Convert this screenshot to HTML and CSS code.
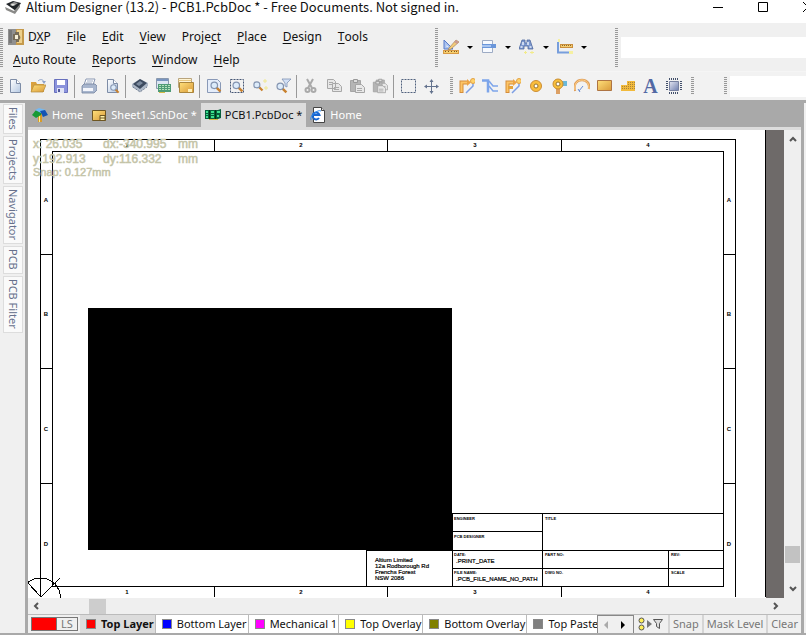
FILE: index.html
```
<!DOCTYPE html>
<html lang="en">
<head>
<meta charset="utf-8">
<title>Altium Designer (13.2) - PCB1.PcbDoc *</title>
<link rel="stylesheet" href="styles.css">
</head>
<body>
<svg class="defs" aria-hidden="true">
  <defs>
    <linearGradient id="blue" x1="0" y1="0" x2="1" y2="1"><stop offset="0" stop-color="#fff"/><stop offset="1" stop-color="#b4c8e2"/></linearGradient>
    <linearGradient id="gold" x1="0" y1="0" x2="1" y2="1"><stop offset="0" stop-color="#ffe07a"/><stop offset="1" stop-color="#d99a3a"/></linearGradient>
    <linearGradient id="steel" x1="0" y1="0" x2="1" y2="1"><stop offset="0" stop-color="#e4e6f2"/><stop offset="1" stop-color="#6f7fae"/></linearGradient>
    <symbol id="page" viewBox="0 0 16 16"><path d="M3.500 1.500h6l4 4v9h-10z" fill="url(#blue)" stroke="#7d8ca6"/><path d="M9.500 1.500v4h4" fill="#fff" stroke="#7d8ca6"/></symbol>
    <symbol id="lens" viewBox="0 0 16 16"><path d="M9 9l5 5" stroke="#c8812e" stroke-width="3"/><circle cx="6.500" cy="6.500" r="4" fill="#dcebfa" stroke="#8494b0" stroke-width="1.500"/></symbol>
    <symbol id="clip" viewBox="0 0 16 16"><path d="M1.500 2.500h10v11h-10z" fill="#b5b5b5" stroke="#a5a5a5"/><path d="M4.500 1.500h4v3h-4z" fill="#ddd" stroke="#999"/><path d="M6.500 6.500h6l3 3v5h-9z" fill="#e8e8e8" stroke="#a5a5a5"/><path d="M8 10.500h5M8 12.500h5" stroke="#aaa"/></symbol>
    <symbol id="pcb" viewBox="0 0 16 16"><path d="M0 3h13l3-1v9l-3 1H0z" fill="#075f3d"/><path d="M1 4h2v2H1zM1 7h2v1H1zM1 9h2v2H1zM6 4h3v2H6zM6 7h3v1H6zM6 9h3v2H6zM12 4h3v2h-3zM12 8h2v2h-2z" fill="#3be08c"/><path d="M4.500 3v9M10.500 3v9" stroke="#031"/><path d="M4 12h9v1H4z" fill="#d5b944"/></symbol>
    <symbol id="route" viewBox="0 0 16 16"><path d="M2.500 15V4.500H9" fill="none" stroke="#d58d3b" stroke-width="4"/><path d="M2.500 14V4.500H9" fill="none" stroke="#fdc566" stroke-width="2"/><path d="M8 1l4 3.500L8 8z" fill="#eda445"/><path d="M7 15l7-7V4" fill="none" stroke="#7c9ee4" stroke-width="1.500"/><circle cx="14" cy="3" r="2.500" fill="#ffd36b" stroke="#e2a145"/></symbol>
  </defs>
</svg>

<header class="titlebar">
  <svg class="logo" viewBox="0 0 16 16"><path d="M1 4l7-3 8 2-5 8z" fill="#202428"/><path d="M5 4l4-2 4 1-4 3z" fill="#999"/><path d="M0 7l9 4 6-7v3l-5 7-9-4z" fill="#8a8a88"/><path d="M7 4l3 0-2 2-3-1z" fill="#e4e4df"/></svg>
  <h1>Altium Designer (13.2) - PCB1.PcbDoc * - Free Documents. Not signed in.</h1>
  <div class="winbtns">
    <button aria-label="Minimize"><svg viewBox="0 0 10 10"><path d="M0 5.500h10" stroke="#000"/></svg></button>
    <button aria-label="Maximize"><svg viewBox="0 0 10 10"><path d="M.5 .5h9v9h-9z" fill="none" stroke="#000"/></svg></button>
    <button aria-label="Close"><svg viewBox="0 0 10 10"><path d="M0 0l10 10M10 0L0 10" stroke="#000"/></svg></button>
  </div>
</header>

<div class="menurow">
  <i class="grip"></i>
  <nav class="menus">
    <div>
      <button class="dxp"><svg viewBox="0 0 16 16"><path d="M0 0h8v16H0z" fill="#909090"/><path d="M8 0h8v16H8z" fill="#c59a4c"/><path d="M9 1h5v13H9z" fill="#edd08c"/><path d="M1 1h3v13H1z" fill="#777"/><path d="M5 5h2V3h4v3a3 3 0 010 5v2H8v-2H5z" fill="#776c58"/><path d="M7 6h3v4H7z" fill="#f6efd8"/></svg><span>D<u>X</u>P</span></button>
      <button><u>F</u>ile</button><button><u>E</u>dit</button><button><u>V</u>iew</button><button>Proje<u>c</u>t</button><button><u>P</u>lace</button><button><u>D</u>esign</button><button><u>T</u>ools</button>
    </div>
    <div>
      <button><u>A</u>uto Route</button><button><u>R</u>eports</button><button><u>W</u>indow</button><button><u>H</u>elp</button>
    </div>
  </nav>
  <i class="grip"></i>
  <div class="drops">
    <button aria-label="Utility tools"><svg viewBox="0 0 16 16"><path d="M1 1v9h9z" fill="#a9c2f0" stroke="#587ac8"/><path d="M3.500 6v2h2z" fill="#f0f0f0"/><path d="M6 9l7-8 3 2-8 7-3 1z" fill="#f2ca78" stroke="#9b7950" stroke-width=".6"/><path d="M13 1l3 2-2 2-3-2z" fill="#c99a90"/><path d="M0 11h16v4H0z" fill="#d89a45"/><path d="M1 12h14v2H1z" fill="#f6cf6e"/><path d="M2.500 12v1M5.500 12v1M8.500 12v1M11.500 12v1M13.500 12v1" stroke="#7b5520"/></svg><span class="arrow"></span></button>
    <button aria-label="Align"><svg viewBox="0 0 16 16"><path d="M1.500 1.500h10v5h-10zM1.500 8.500h10v5h-10z" fill="#f7faff" stroke="#9dabc4"/><path d="M1 5h14v4H1z" fill="#6a96da"/><path d="M1 6h9v2H1z" fill="#a9c5ef"/></svg><span class="arrow"></span></button>
    <button aria-label="Find"><svg viewBox="0 0 16 16"><path d="M3 1h3v3h2V1h3l3 9H9V7H5v3H0z" fill="#7d99cf" stroke="#50699f" stroke-width=".8"/><path d="M1.500 8h2M10.500 8h2M4 3v3M9 3v3" stroke="#e6eefb" stroke-width="1.500"/><path d="M5 13.500h3M11 13.500h4M6.500 12v3M13 12v3" stroke="#f2eb8a"/></svg><span class="arrow"></span></button>
    <button aria-label="Dimensions"><svg viewBox="0 0 16 16"><path d="M1 3v10.500h11" fill="none" stroke="#779edc" stroke-width="2"/><path d="M3 5h13v4H3z" fill="#c98f3e"/><path d="M4 6h11v2H4z" fill="#f5cd70"/><path d="M5 6.500h10" stroke="#8c672e" stroke-dasharray="1 1"/><path d="M1 0h2v3H1zM12 12h4v3h-4z" fill="#f5f0a1"/></svg><span class="arrow"></span></button>
  </div>
  <i class="grip"></i>
  <input class="address" aria-label="Address">
</div>

<div class="toolbar">
  <i class="grip"></i>
  <button aria-label="New"><svg><use href="#page"/></svg></button>
  <button aria-label="Open"><svg viewBox="0 0 16 16"><path d="M1 4h5l1 2h7v8H1z" fill="#d9a13f"/><path d="M4 7h12l-3 7H1z" fill="url(#gold)" stroke="#b38a3e" stroke-width=".7"/><path d="M8 3c2-2 5-2 6 1" fill="none" stroke="#8da2ca"/><path d="M12 3h4l-2 3z" fill="#8da2ca"/></svg></button>
  <button aria-label="Save"><svg viewBox="0 0 16 16"><path d="M1.500 1.500h13v13h-13z" fill="#8b93dc" stroke="#6870bd"/><path d="M4 2h8v5H4z" fill="#fff"/><path d="M4 10h7v5H4z" fill="#e1e4f5"/><path d="M5 11h2v3H5z" fill="#535a9c"/></svg></button>
  <i class="sep"></i>
  <button aria-label="Print"><svg viewBox="0 0 16 16"><path d="M5 1h9l-2 6H3z" fill="#fff" stroke="#8a98b3"/><path d="M6 3h6M5 5h6" stroke="#9dabc4"/><path d="M1 8l2-2h11l2 2v4l-3 3H1z" fill="#a8b6ce" stroke="#74839f" stroke-width=".8"/><path d="M2 10h10v3H2z" fill="#f4f6fc"/></svg></button>
  <button aria-label="Preview"><svg viewBox="0 0 16 16"><use href="#page"/><use href="#lens" x="5" y="5" width="11" height="11"/></svg></button>
  <i class="sep"></i>
  <button aria-label="Components"><svg viewBox="0 0 16 16"><path d="M0 6l8-5 8 4v3l-8 6-8-5z" fill="#adb8c7"/><path d="M1 6l7-5 7 4-7 6z" fill="#3c4a5e"/><path d="M4 6l4-3 3 2-4 3z" fill="#7d8ca0"/><path d="M1 9l7 5 7-5" fill="none" stroke="#57657c" stroke-dasharray="1 1"/></svg></button>
  <button aria-label="Board view"><svg viewBox="0 0 16 16"><path d="M1.500 .5h12v10h-12z" fill="#dce5f2" stroke="#8998ad"/><path d="M2 2h11" stroke="#7894bf" stroke-width="2"/><path d="M3 6h13v8H3z" fill="#4f9b76"/><path d="M4 7.500h12M4 9.500h12M4 11.500h12" stroke="#b4e2bb" stroke-dasharray="2 1"/><path d="M4 14h6v1H4z" fill="#d5b944"/></svg></button>
  <button aria-label="Sheets"><svg viewBox="0 0 16 16"><path d="M.5 .5h13v9H.5z" fill="#fff4d3" stroke="#b9a47c"/><path d="M.5 2.500h13" stroke="#e7c782"/><path d="M1.500 4.500h14v10h-14z" fill="url(#gold)" stroke="#a9853d"/><path d="M10 11h4v3h-4z" fill="#fff0b8"/></svg></button>
  <i class="sep"></i>
  <button aria-label="Zoom document"><svg viewBox="0 0 16 16"><path d="M1.500 1.500h10l3 3v10h-13z" fill="#e5edfa" stroke="#8999b7"/><use href="#lens" x="3" y="2" width="13" height="13"/></svg></button>
  <button aria-label="Zoom area"><svg viewBox="0 0 16 16"><path d="M1.500 1.500h13v13h-13z" fill="none" stroke="#465775" stroke-dasharray="2 1"/><use href="#lens" x="2" y="2" width="13" height="13"/></svg></button>
  <button aria-label="Zoom selected"><svg viewBox="0 0 16 16"><use href="#lens" x="0" y="2" width="12" height="12"/><path d="M13 1v4M11 3h4M14 8v4M12 10h4" stroke="#f0e88e"/></svg></button>
  <button aria-label="Zoom filtered"><svg viewBox="0 0 16 16"><use href="#lens" x="0" y="3" width="13" height="13"/><path d="M7 1h9l-4 4v4l-2-1V5z" fill="#d3e0f5" stroke="#7f92b4" stroke-width=".8"/></svg></button>
  <i class="sep"></i>
  <button aria-label="Cut"><svg viewBox="0 0 16 16"><path d="M4 1l5 9M10 1L5 10" stroke="#aaa" stroke-width="2"/><circle cx="4.500" cy="12" r="2" fill="none" stroke="#aaa" stroke-width="2"/><circle cx="10.500" cy="12" r="2" fill="none" stroke="#aaa" stroke-width="2"/></svg></button>
  <button aria-label="Copy"><svg viewBox="0 0 16 16"><path d="M1.500 1.500h6l2 2v7h-8zM6.500 5.500h6l3 3v5h-9z" fill="#e7e7e7" stroke="#a8a8a8"/><path d="M3 4.500h4M3 6.500h3M8 9.500h5M8 11.500h5" stroke="#aaa"/></svg></button>
  <button aria-label="Paste"><svg><use href="#clip"/></svg></button>
  <button aria-label="Paste special"><svg viewBox="0 0 16 16"><use href="#clip" x="3" y="0" width="13" height="13"/><use href="#clip" x="0" y="2" width="14" height="14"/></svg></button>
  <i class="sep"></i>
  <button aria-label="Select area"><svg viewBox="0 0 16 16"><path d="M1.500 1.500h14v13h-14z" fill="none" stroke="#52637f" stroke-dasharray="2 1"/></svg></button>
  <button aria-label="Move"><svg viewBox="0 0 16 16"><path d="M8.500 2v12M2 8.500h13" stroke="#64738e"/><path d="M6.500 4l2-3 2 3zM6.500 13l2 3 2-3zM4 6.500l-3 2 3 2zM13 6.500l3 2-3 2z" fill="#64738e"/></svg></button>
  <i class="grip second"></i>
  <button aria-label="Route"><svg><use href="#route"/></svg></button>
  <button aria-label="Differential route"><svg viewBox="0 0 16 16"><path d="M0 2.500h6v12" fill="none" stroke="#7da5ea" stroke-width="2.500"/><path d="M7 3l4 5h5M7 8l4 5h5" fill="none" stroke="#7da5ea" stroke-width="1.500"/></svg></button>
  <button aria-label="Multi route"><svg viewBox="0 0 16 16"><use href="#route"/><path d="M3 9.500h5" stroke="#e5a33a" stroke-width="3"/></svg></button>
  <button aria-label="Pad"><svg viewBox="0 0 16 16"><circle cx="8" cy="8" r="5.500" fill="#fabd3c" stroke="#cc8d35"/><circle cx="8" cy="8" r="2" fill="#fff" stroke="#99742c"/></svg></button>
  <button aria-label="Via"><svg viewBox="0 0 16 16"><path d="M5 8h4v8H5z" fill="#dca064"/><path d="M8 3h8v5H8z" fill="#6ab9da"/><circle cx="7" cy="6" r="5" fill="#f8bf3d" stroke="#c98d30"/><circle cx="7" cy="6" r="2" fill="#fff" stroke="#99742c"/></svg></button>
  <button aria-label="Arc"><svg viewBox="0 0 16 16"><path d="M1 13C-1 6 3 2 8 2s8 4 7 9" fill="none" stroke="#dfa05c" stroke-width="2.500"/><path d="M1 12C0 6 3 2 8 2s7 4 7 9" fill="none" stroke="#ffd08a"/><path d="M5 13l4-5M4 11l2 3" fill="none" stroke="#688dd5"/></svg></button>
  <button aria-label="Fill"><svg viewBox="0 0 16 16"><path d="M.5 2.500h14v10H.5z" fill="url(#gold)" stroke="#ae7443"/></svg></button>
  <button aria-label="Polygon"><svg viewBox="0 0 16 16"><path d="M1 7h6V3h8v10H1z" fill="#f2ba3b"/><path d="M2 8.500h13M2 10.500h13M8 4.500h7M8 6.500h7" stroke="#a9843a" stroke-dasharray="1 1"/></svg></button>
  <button aria-label="String" class="letter">A</button>
  <button aria-label="Component"><svg viewBox="0 0 16 16"><path d="M3 1h10M3 15h10" stroke="#43506b" stroke-width="2" stroke-dasharray="1 1"/><path d="M1 3v10M15 3v10" stroke="#43506b" stroke-width="2" stroke-dasharray="1 1"/><path d="M3.500 3.500h9v9h-9z" fill="url(#steel)" stroke="#7781a0"/></svg></button>
  <i class="grip third"></i>
  <i class="grip fourth"></i>
  <input class="filter" aria-label="Filter">
</div>

<main class="work">
  <aside class="panels">
    <button>Files</button><button>Projects</button><button>Navigator</button><button>PCB</button><button>PCB Filter</button>
  </aside>
  <section class="editor">
    <nav class="tabs">
      <button><svg viewBox="0 0 16 16"><path d="M6 6h4v9H6z" fill="#d89b28"/><path d="M7 6h1v9H7z" fill="#fff08a"/><path d="M0 8l4-5 5 1v4l-5 3z" fill="#179a35"/><path d="M3 3l4-2 7 2-5 3z" fill="#75b9f2"/><path d="M8 4l5-1 3 5-5 2z" fill="#1353b5"/></svg>Home</button>
      <button><svg viewBox="0 0 16 16"><path d="M1.500 3.500h13v10h-13z" fill="url(#gold)" stroke="#6e5622"/><path d="M9 8.500h5v5H9z" fill="#fff2aa" stroke="#6e5622"/><path d="M9 11h5" stroke="#6e5622"/></svg>Sheet1.SchDoc *</button>
      <button class="on"><svg><use href="#pcb"/></svg>PCB1.PcbDoc *</button>
      <button><svg viewBox="0 0 16 16"><path d="M3.500 .5h8l3 3v12h-11z" fill="#fff" stroke="#444"/><path d="M11.500 .5v3h3" fill="#ddd" stroke="#444"/><path d="M9 11a3.500 3.500 0 11.500-3H3" fill="none" stroke="#1767d2" stroke-width="2"/><path d="M1 13C-1 9 8 2 11 4" fill="none" stroke="#2d8cf0"/></svg>Home</button>
    </nav>
    <div class="view">
      <svg class="sheet" role="img" aria-label="PCB sheet">
        <g transform="translate(-28 -130)">
          <path class="beyond" d="M766 130h18v2000h-18z"/>
          <path class="ink" d="M765.500 130v467M40.500 597V139.500h695V597M52.500 586.500v-435h671v435zM214.500 139v12M387.500 139v12M561.500 139v12M214.500 586v11M387.500 586v11M561.500 586v11M40 254.500h12M40 368.500h12M40 483.500h12M723 254.500h12M723 368.500h12M723 483.500h12M452 513.500h271M452 531.500h90M366 550.500h357M452 568.500h271M366.500 550v36M452.500 513v73M542.500 513v73M668.500 550v36"/>
          <path d="M88 308h364v242H88z"/>
          <g class="ink"><circle cx="40.500" cy="598" r="20"/><path d="M28 583l13 14 19-19"/><circle cx="54" cy="585" r="2"/></g>
          <g class="zone">
            <text x="127" y="147">1</text><text x="301" y="147">2</text><text x="475" y="147">3</text><text x="648" y="147">4</text>
            <text x="127" y="594">1</text><text x="301" y="594">2</text><text x="475" y="594">3</text><text x="648" y="594">4</text>
            <text x="46" y="202">A</text><text x="46" y="316">B</text><text x="46" y="431">C</text><text x="46" y="546">D</text>
            <text x="729" y="202">A</text><text x="729" y="316">B</text><text x="729" y="431">C</text><text x="729" y="546">D</text>
          </g>
          <g class="note"><text x="375" y="562">Altium Limited</text><text x="375" y="568">12a Rodborough Rd</text><text x="375" y="574">Frenchs Forest</text><text x="375" y="580">NSW 2086</text><text x="456" y="563">.PRINT_DATE</text><text x="456" y="581">.PCB_FILE_NAME_NO_PATH</text></g>
          <g class="tiny"><text x="454" y="520">ENGINEER</text><text x="454" y="538">PCB DESIGNER</text><text x="454" y="556">DATE:</text><text x="454" y="574">FILE NAME:</text><text x="545" y="520">TITLE</text><text x="545" y="556">PART NO:</text><text x="545" y="574">DWG NO.</text><text x="671" y="556">REV:</text><text x="671" y="574">SCALE</text></g>
          <g class="hud"><text x="33" y="148">x: 26.035</text><text x="103" y="148">dx:-340.995</text><text x="178" y="148">mm</text><text x="33" y="163">y:192.913</text><text x="103" y="163">dy:116.332</text><text x="178" y="163">mm</text><text class="snap" x="33" y="176">Snap: 0.127mm</text></g>
        </g>
      </svg>
      <div class="vscroll"><svg viewBox="0 0 8 8"><path d="M1 6l3-3 3 3"/></svg><i></i><svg viewBox="0 0 8 8"><path d="M1 2l3 3 3-3"/></svg></div>
      <div class="hscroll"><svg viewBox="0 0 8 8"><path d="M6 1L3 4l3 3"/></svg><i></i><svg viewBox="0 0 8 8"><path d="M2 1l3 3-3 3"/></svg></div>
    </div>
    <div class="layers">
      <button class="ls"><i></i>LS</button>
      <div class="layertabs">
        <button class="on"><i class="red"></i>Top Layer</button><button><i class="blue"></i>Bottom Layer</button><button><i class="pink"></i>Mechanical 1</button><button><i class="yellow"></i>Top Overlay</button><button><i class="olive"></i>Bottom Overlay</button><button><i class="gray"></i>Top Paste</button>
      </div>
      <div class="nav"><button aria-label="Previous layers"><svg viewBox="0 0 8 8"><path d="M6 0v8L2 4z" fill="#aaa"/></svg></button><button aria-label="Next layers"><svg viewBox="0 0 8 8"><path d="M2 0v8l4-4z"/></svg></button></div>
      <button class="filters" aria-label="Mask filter"><svg viewBox="0 0 28 14"><circle cx="4.500" cy="3.500" r="2.500" fill="#ffef58" stroke="#555"/><circle cx="4.500" cy="10.500" r="2.500" fill="#ffef58" stroke="#555"/><path d="M10 3v8l5-4z" fill="#777"/><path d="M16.500 2.500h9l-3 4v5l-3-2v-3z" fill="#ddd" stroke="#555"/></svg></button>
      <button class="act">Snap</button><button class="act">Mask Level</button><button class="act">Clear</button>
    </div>
  </section>
</main>
</body>
</html>
```
FILE: styles.css
```
* { box-sizing: border-box; }
body {
  margin: 0;
  height: 100vh;
  display: flex;
  flex-direction: column;
  overflow: hidden;
  background: #f0f0f0;
  color: #111;
  font: 11px/16px "Noto Sans", "Open Sans", sans-serif;
}
button {
  flex: none;
  display: flex;
  align-items: center;
  justify-content: center;
  padding: 0;
  border: 0;
  background: none;
  color: inherit;
  font: inherit;
  white-space: nowrap;
}
button svg { width: 16px; height: 16px; flex: none; }
input { border: 0; background: #fff; min-width: 0; padding: 0 4px; }
.defs { position: absolute; width: 0; height: 0; }

.titlebar { display: flex; height: 23px; flex: none; background: #fff; padding-left: 5px; overflow: hidden; }
.logo { width: 16px; height: 16px; flex: none; }
.titlebar h1 { flex: 1; margin: 0 0 0 5px; font: 400 13px/14px "Noto Sans CJK SC", "Noto Sans", sans-serif; white-space: nowrap; }
.winbtns { display: flex; align-items: flex-start; margin-right: -24px; }
.winbtns button { width: 45px; height: 14px; }
.winbtns svg { width: 10px; height: 10px; }

.grip {
  flex: none;
  width: 3px;
  background: repeating-linear-gradient(#999 0 1px, #f0f0f0 1px 2px);
}
.menurow { display: flex; flex: none; height: 49px; border-bottom: 1px solid #f5f5f5; }
.menurow .grip { margin: 5px 0 4px; }
.menurow .grip:first-child { margin-right: 5px; }
.menus { width: 427px; padding-top: 2px; font-size: 12px; }
.menus div { display: flex; height: 23px; gap: 16px; }
.menus div + div { padding-left: 5px; }
.menus u { text-underline-offset: 2px; }
.dxp { gap: 4px; }
.drops { display: flex; align-items: center; gap: 8px; width: 177px; padding-left: 5px; }
.drops button { gap: 8px; }
.arrow { border: 3px solid transparent; border-top-color: #000; border-bottom: 0; }
.address { flex: 1; height: 21px; margin: 14px 0 0 3px; }

.toolbar { display: flex; flex: none; align-items: center; height: 28px; background: #f2f2f2; }
.toolbar .grip { height: 18px; }
.toolbar button { width: 23px; height: 23px; }
.sep { flex: none; width: 1px; height: 23px; margin: 0 2px; background: #999; }
.toolbar .second { margin: 0 2px 0 8px; }
.toolbar .third { margin-left: 6px; }
.toolbar .fourth { margin: 0 3px 0 30px; }
.toolbar .letter { color: #5269a4; font: bold 20px/20px "Liberation Serif", serif; }
.filter { flex: 1; height: 21px; }

.work { flex: 1; display: flex; min-height: 0; border-top: 3px solid #a9a9a9; border-bottom: 2px solid #a9a9a9; }
.panels { flex: none; width: 25px; padding: 1px 2px 0 3px; display: flex; flex-direction: column; gap: 2px; }
.panels button { writing-mode: vertical-rl; padding: 2px 0 3px; border: 1px solid #ddd; background: #fafafa; color: #66708c; }
.editor {
  flex: 1;
  min-width: 0;
  display: flex;
  flex-direction: column;
  margin-right: 2px;
  border-left: 3px solid #a9a9a9;
  border-right: 3px solid #a9a9a9;
}
.tabs { flex: none; display: flex; height: 27px; background: #a9a9a9; border-bottom: 3px solid #dcdcdc; color: #fff; }
.tabs button { gap: 4px; padding: 0 4px; }
.tabs .on { background: #dcdcdc; color: #111; }

.view { flex: 1; min-height: 0; display: grid; grid-template: minmax(0, 1fr) 16px / minmax(0, 1fr) 17px; background: #efefef; }
.sheet { width: 100%; height: 100%; background: #fff; display: block; }
.beyond { fill: #6e6a69; }
.ink { fill: none; stroke: #000; shape-rendering: crispEdges; }
.zone, .note, .tiny { font-family: "Liberation Sans", sans-serif; }
.zone { font-size: 6px; font-weight: 700; text-anchor: middle; }
.note { font-size: 6px; stroke: #000; stroke-width: .2px; }
.tiny { font-size: 4px; font-weight: 700; }
.hud { font: 12px "Liberation Sans", sans-serif; fill: #c4c4a8; stroke: #c4c4a8; stroke-width: .5px; }
.hud .snap { font-size: 11px; }
.vscroll, .hscroll { display: flex; justify-content: space-between; align-items: center; }
.vscroll { flex-direction: column; padding: 5px 0; }
.hscroll { padding: 0 4px; }
.vscroll svg, .hscroll svg { width: 8px; height: 8px; fill: none; stroke: #555; stroke-width: 2; }
.vscroll i { width: 15px; height: 17px; margin-top: auto; margin-bottom: 22px; background: #c2c2c2; }
.hscroll i { width: 17px; height: 15px; margin-left: 49px; margin-right: auto; background: #cdcdcd; }

.layers { flex: none; display: flex; align-items: center; height: 19px; border-top: 1px solid #bbb; background: #f0f0f0; }
.ls { width: 47px; height: 14px; margin: 0 2px 0 3px; border: 1px solid #777; color: #777; justify-content: flex-start; gap: 4px; }
.ls i { width: 25px; height: 12px; background: #f00; border-right: 1px solid #777; }
.layertabs { flex: 1; min-width: 0; display: flex; overflow: hidden; background: #fff; }
.layertabs button { height: 18px; gap: 5px; padding: 0 1px 0 6px; border-right: 1px solid #bbb; }
.layertabs .on { background: #dcdcdc; font-weight: 700; }
.layertabs i { width: 10px; height: 10px; border: 1px solid #888; }
.red { background: #f00; }
.blue { background: #00f; }
.pink { background: #f0f; }
.yellow { background: #ff0; }
.olive { background: #808000; }
.gray { background: #808080; }
.nav { display: flex; flex: none; width: 37px; height: 18px; border: 1px solid #888; border-bottom: 0; }
.nav button { width: 17px; }
.nav svg { width: 8px; height: 8px; }
.filters { margin: 0 3px; }
.filters svg { width: 28px; height: 14px; }
.act { height: 18px; padding: 0 3px; border-left: 2px solid #d5d5d5; color: #777; }
```
